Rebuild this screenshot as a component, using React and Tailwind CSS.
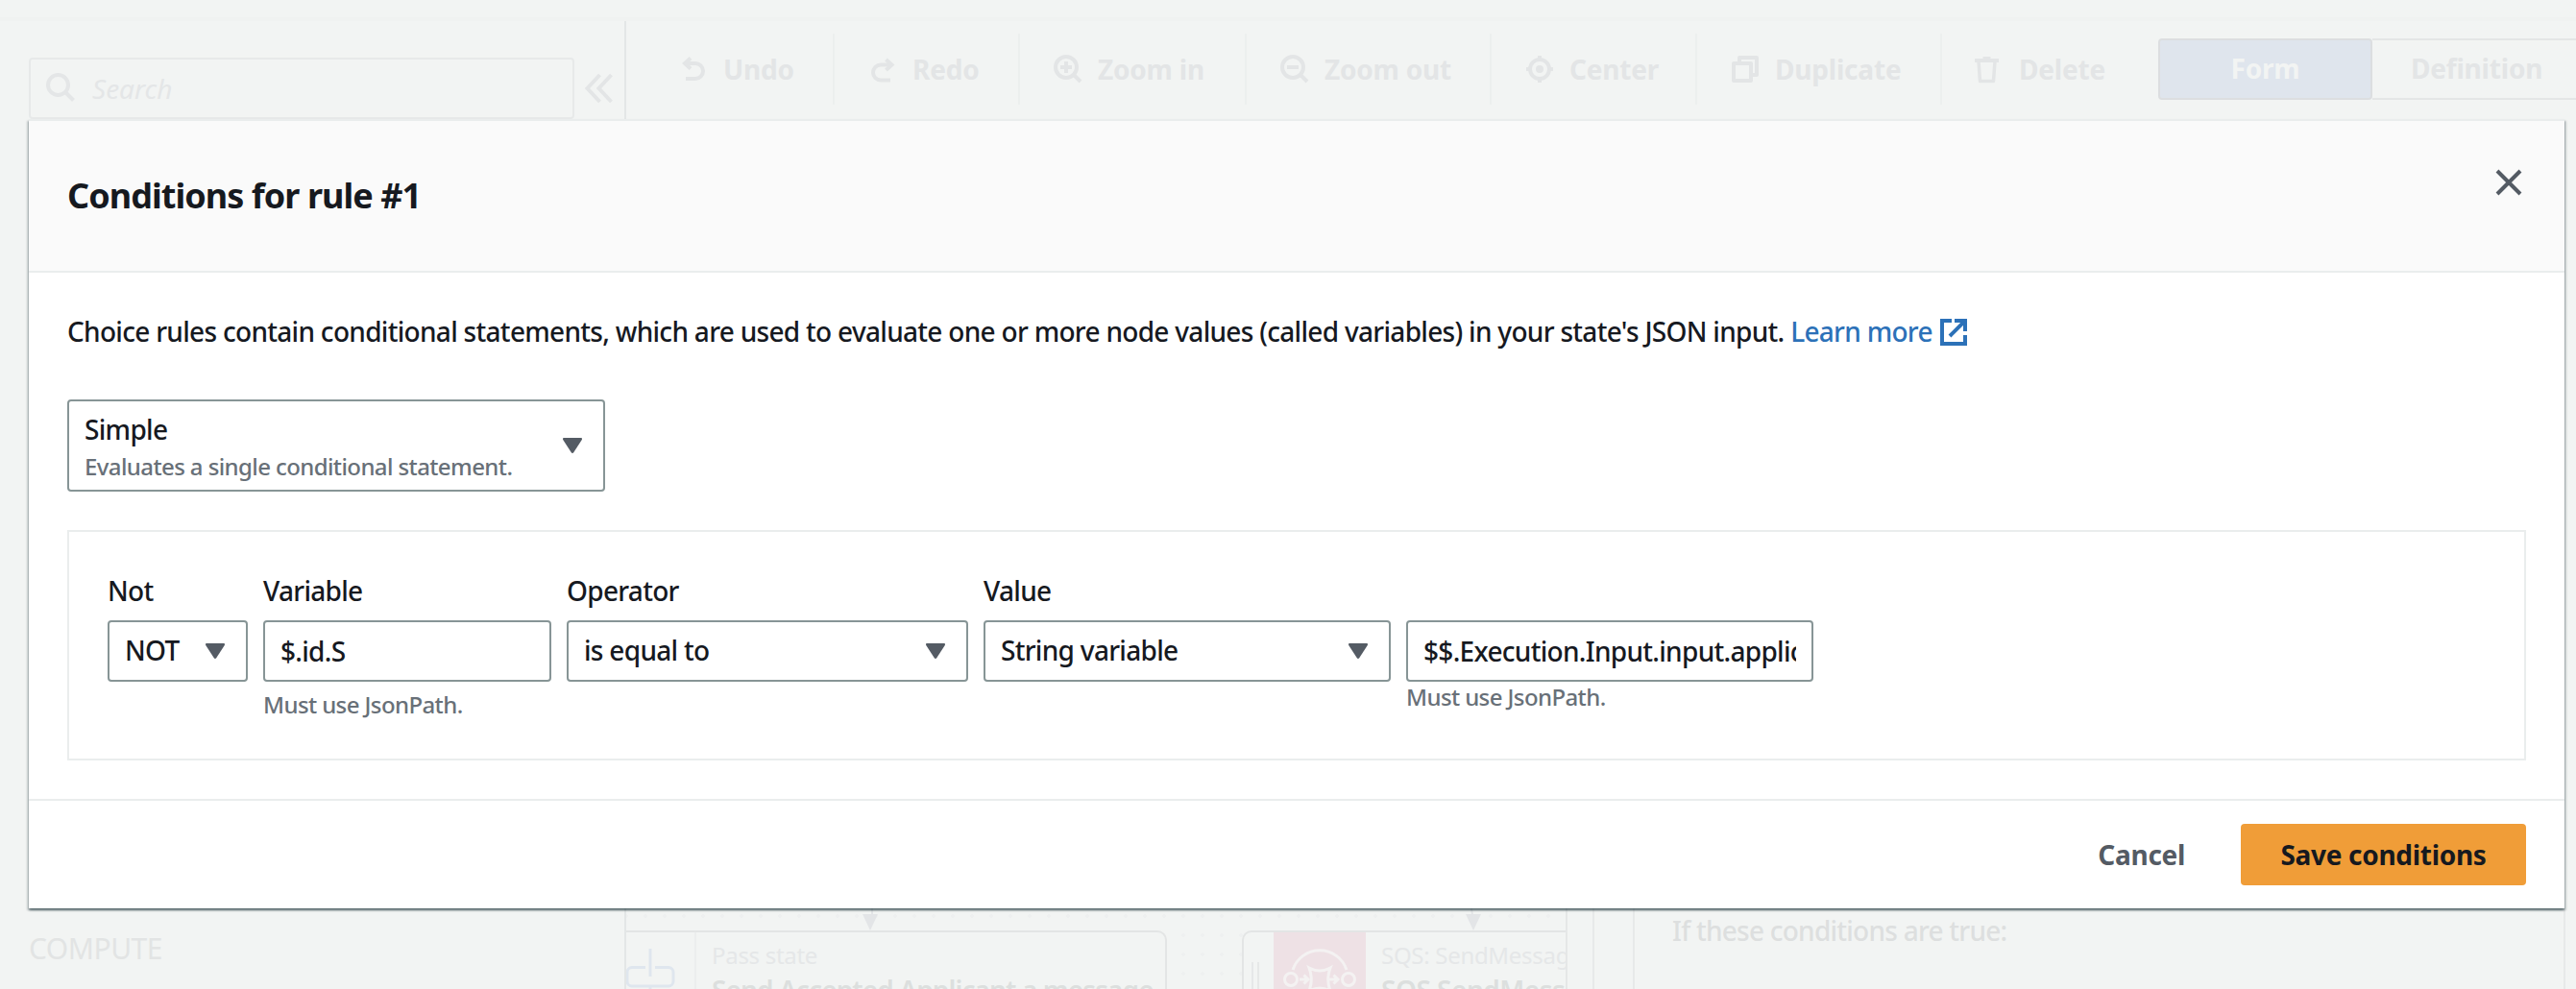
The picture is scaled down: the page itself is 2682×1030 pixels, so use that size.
const line = { fill: "none", stroke: "currentColor", strokeWidth: 4, strokeLinejoin: "round" };

function Svg({ size = 32, children, className = "" }) {
  return (
    <svg width={size} height={size} viewBox={`0 0 ${size} ${size}`} className={`shrink-0 ${className}`} {...line}>
      {children}
    </svg>
  );
}

const icons = {
  undo: (
    <>
      <path d="M13 4.5 7 10l6 5.5" strokeLinejoin="miter" />
      <path d="M7 10h11a8 8 0 0 1 0 16H8" />
    </>
  ),
  redo: (
    <>
      <path d="m19.5 6 6 5.5-6 5.5" strokeLinejoin="miter" />
      <path d="M25 11.5H14a8 8 0 0 0 0 16h10" />
    </>
  ),
  zoomIn: (
    <>
      <circle cx="14" cy="14" r="11" />
      <path d="m21.5 21.5 7.5 7.5M8 14h12M14 8v12" />
    </>
  ),
  zoomOut: (
    <>
      <circle cx="14" cy="14" r="11" />
      <path d="m21.5 21.5 7.5 7.5M8 14h12" />
    </>
  ),
  center: (
    <>
      <circle cx="16" cy="16" r="10" />
      <circle cx="16" cy="16" r="4" fill="currentColor" stroke="none" />
      <path d="M16 2v4M16 26v4M2 16h4M26 16h4" />
    </>
  ),
  duplicate: (
    <>
      <rect x="4" y="10" width="18" height="18" />
      <path d="M10 8V4h18v18h-4" />
    </>
  ),
  remove: (
    <>
      <path d="M1 7h25M9.500 5h8" />
      <path d="m5 8 1.5 20.500h14L22 8" strokeWidth="3.500" />
    </>
  ),
};

const tools = [
  { label: "Undo", icon: "undo", cls: "w-[217px] pl-[54px] border-r-2" },
  { label: "Redo", icon: "redo", cls: "w-[193px] pl-[34px] border-r-2" },
  { label: "Zoom in", icon: "zoomIn", cls: "w-[236px] pl-[34px] border-r-2" },
  { label: "Zoom out", icon: "zoomOut", cls: "w-[255px] pl-[34px] border-r-2" },
  { label: "Center", icon: "center", cls: "w-[214px] pl-[34px] border-r-2" },
  { label: "Duplicate", icon: "duplicate", cls: "w-[255px] pl-[34px] border-r-2" },
  { label: "Delete", icon: "remove", cls: "w-[225px] pl-[33px]" },
];

function Toolbar() {
  return (
    <div className="flex h-[104px] pt-[13px] text-[28px] font-bold tracking-[-0.2px] text-[#e3e5e6]">
      {tools.map((t) => (
        <div key={t.label} className={`flex h-[74px] shrink-0 items-center gap-[15px] border-[#ecefee] ${t.cls}`}>
          <Svg>{icons[t.icon]}</Svg>
          <span className="relative whitespace-nowrap pb-px leading-[44px]">{t.label}</span>
        </div>
      ))}
      <div className="mt-[5px] flex h-16 shrink-0">
        <div className="flex w-[223px] items-center justify-center rounded-[4px] border-2 border-[#dcdee0] bg-[#dfe5ed] pb-0.5 text-[#f2f4f3]">
          Form
        </div>
        <div className="flex w-[240px] items-center border-y-2 border-[#e4e6e6] pb-0.5 pl-10">Definition</div>
      </div>
    </div>
  );
}

function Sidebar() {
  return (
    <div className="flex w-[652px] shrink-0 flex-col border-r-2 border-[#e3e6e6] pl-[30px]">
      <div className="mt-[38px] flex items-center">
        <div className="flex h-16 w-[568px] items-center gap-3 rounded-[4px] border-2 border-[#e7e9e9] pl-3.5 text-[#e4e6e7]">
          <Svg>
            <circle cx="14.500" cy="12.500" r="10.500" />
            <path d="m22 20 8.500 8.500" />
          </Svg>
          <span className="pl-1.5 text-[28px] italic leading-[44px]">Search</span>
        </div>
        <Svg className="ml-[10px] text-[#e3e5e6]">
          <path d="M16.500 2 3.500 16l13 14M28.500 2 15.500 16l13 14" strokeLinejoin="miter" />
        </Svg>
      </div>
      <div className="mt-[842px] text-[30px] leading-[44px] tracking-[-0.5px] text-[#e2e4e4]">COMPUTE</div>
    </div>
  );
}

function Canvas() {
  return (
    <div className="relative w-[980px] shrink-0 overflow-hidden border-r-2 border-[#e5e7e7] bg-[radial-gradient(circle,#eef0f0_1.500px,transparent_2px)] bg-[length:20px_20px] bg-[position:10px_-2px]">
      <div className="absolute -left-[20px] top-[843px] flex h-[130px] w-[583px] rounded-[10px] border-2 border-[#e3e5e5] bg-[#f2f4f3]">
        <div className="w-[91px] shrink-0 border-r-2 border-[#eceeee]">
          <svg width="72" height="90" viewBox="0 0 72 90" fill="none" stroke="#dfe6ee" strokeWidth="3">
            <path d="M38 36.500H24a5 5 0 0 0-5 5V51a5 5 0 0 0 5 5h38a5 5 0 0 0 5-5v-9.500a5 5 0 0 0-5-5H48M43 17v29M43 57v20" />
          </svg>
        </div>
        <div className="whitespace-nowrap pl-4 pt-[6px]">
          <div className="text-[24px] leading-[36px] tracking-[-0.3px] text-[#e5e7e8]">Pass state</div>
          <div className="text-[28px] font-semibold leading-[36px] tracking-[-0.9px] text-[#dcdfde]">
            Send Accepted Applicant a message
          </div>
        </div>
      </div>
      <div className="absolute left-[641px] top-[843px] flex h-[130px] w-[560px] rounded-[10px] border-2 border-[#e3e5e5] bg-[#f2f4f3]">
        <div className="flex w-[31px] shrink-0 gap-1 pl-2 pt-[31px]">
          <div className="w-0.5 bg-[#e6e8e8]" />
          <div className="w-0.5 bg-[#e6e8e8]" />
        </div>
        <svg width="96" height="96" viewBox="0 0 96 96" className="shrink-0 bg-[#eee1e5]" fill="none" stroke="#f4f2f2" strokeWidth="3">
          <path d="M20 39a29.500 29.500 0 0 1 56 0" />
          <circle cx="18" cy="49" r="6.500" />
          <circle cx="78" cy="49" r="6.500" />
          <path d="M27 49h8M31.500 44.500 36 49l-4.500 4.500M58 49h8M62.500 44.500 67 49l-4.500 4.500" />
          <path d="M37 37q11 6 22 0-4.500 12 0 24-11-6-22 0 4.500-12 0-24z" />
          <path d="M20 59a29.500 29.500 0 0 0 56 0" />
        </svg>
        <div className="whitespace-nowrap pl-4 pt-[6px]">
          <div className="text-[24px] leading-[36px] tracking-[-0.3px] text-[#e5e7e8]">SQS: SendMessage</div>
          <div className="text-[28px] font-semibold leading-[36px] tracking-[-0.5px] text-[#dcdfde]">SQS SendMessage</div>
        </div>
      </div>
      <svg className="absolute left-[240px] top-[816px]" width="660" height="28" viewBox="0 0 660 28" fill="#e3e5e7" stroke="#e3e5e7">
        <path d="M16 0v10" strokeWidth="2" />
        <path d="M6 10h16l-8 17z" stroke="none" />
        <path d="m639 0 2 10" strokeWidth="2" />
        <path d="M634 10h16l-8 17z" stroke="none" />
      </svg>
    </div>
  );
}

function Inspector() {
  return (
    <div className="flex grow pl-[26px]">
      <div className="w-[44px] shrink-0 border-x-2 border-[#e7e9e9]" />
      <div className="w-[969px] shrink-0 border-r-2 border-[#e7e9e9] pl-[39px] pt-[821px] text-[28px] font-medium leading-[44px] tracking-[-0.75px] text-[#dddfdf]">
        If these conditions are true:
      </div>
    </div>
  );
}

function Caret() {
  return (
    <svg width="20" height="16" viewBox="0 0 20 16" className="shrink-0 fill-[#545b64]">
      <path d="M1.200 0h17.600c1 0 1.500 1 1 1.900l-8.600 13.400c-.6.900-1.800.9-2.400 0L.2 1.900C-.3 1 .2 0 1.200 0z" />
    </svg>
  );
}

const box = "flex h-16 items-center rounded-[4px] border-2 border-[#879596] bg-white";

function Select({ value }) {
  return (
    <div className={`${box} justify-between pl-4 pr-[22px]`}>
      <span className="whitespace-nowrap pb-0.5">{value}</span>
      <Caret />
    </div>
  );
}

function Input({ value }) {
  return (
    <div className={`${box} px-4`}>
      <span className="w-full overflow-hidden whitespace-nowrap">{value}</span>
    </div>
  );
}

function Field({ label, hint, hintClass = "", className, children }) {
  return (
    <div className={`shrink-0 ${className}`}>
      <div className="mb-[11px] h-10 leading-10">{label}</div>
      {children}
      {hint && (
        <div className={`text-[24px] leading-8 tracking-[-0.6px] text-[#687078] ${hintClass}`}>{hint}</div>
      )}
    </div>
  );
}

function Dialog() {
  return (
    <div className="absolute left-[30px] top-[124px] flex h-[822px] w-[2640px] flex-col border-t-2 border-[#eaeded] bg-white text-[28px] font-medium tracking-[-0.7px] text-[#16191f] shadow-[0_2px_2px_rgba(0,28,36,0.5),2px_2px_2px_rgba(0,28,36,0.15),-2px_2px_2px_rgba(0,28,36,0.15)]">
      <div className="flex h-[158px] shrink-0 items-center justify-between border-b-2 border-[#eaeded] bg-[#fafafa] pl-10 pr-[44px]">
        <h1 className="text-[36px] font-bold leading-[44px] tracking-[-0.95px]">Conditions for rule #1</h1>
        <svg width="28" height="28" viewBox="0 0 28 28" className="mb-7 text-[#545b64]" {...line}>
          <path d="m2 2 24 24M26 2 2 26" />
        </svg>
      </div>
      <div className="h-[548px] shrink-0 px-10 pt-[41px]">
        <p className="h-10 whitespace-nowrap leading-10">
          Choice rules contain conditional statements, which are used to evaluate one or more node values (called
          variables) in your state's JSON input.{" "}
          <a className="text-[#2c71b8]">
            Learn more
            <svg width="28" height="28" viewBox="0 0 28 28" className="relative ml-2 inline-block align-[-4px]" {...line} strokeLinejoin="miter">
              <path d="M12 2H2v24h24v-9M15 2h11v11M26 2 10 18" />
            </svg>
          </a>
        </p>
        <div className="mt-[51px] flex h-24 w-[560px] items-center justify-between rounded-[4px] border-2 border-[#879596] pl-4 pr-[22px]">
          <div className="pt-0.5">
            <div className="leading-[42px]">Simple</div>
            <div className="text-[24px] leading-9 tracking-[-0.6px] text-[#687078]">
              Evaluates a single conditional statement.
            </div>
          </div>
          <Caret />
        </div>
        <div className="mt-10 flex h-[240px] gap-4 border-2 border-[#eaeded] pl-10 pt-[41px]">
          <Field label="Not" className="w-[146px]">
            <Select value="NOT" />
          </Field>
          <Field label="Variable" hint="Must use JsonPath." hintClass="mt-2" className="w-[300px]">
            <Input value="$.id.S" />
          </Field>
          <Field label="Operator" className="w-[418px]">
            <Select value="is equal to" />
          </Field>
          <Field label="Value" className="w-[424px]">
            <Select value="String variable" />
          </Field>
          <Field label="" hint="Must use JsonPath." className="w-[424px]">
            <Input value="$$.Execution.Input.input.applicantId" />
          </Field>
        </div>
      </div>
      <div className="flex grow items-center justify-end border-t-2 border-[#eaeded] pr-10 font-bold tracking-[-0.3px]">
        <span className="mr-[58px] pb-px text-[#545b64]">Cancel</span>
        <button className="h-16 w-[297px] rounded-[4px] bg-[#f09d38] pb-px font-bold tracking-[-0.3px]">
          Save conditions
        </button>
      </div>
    </div>
  );
}

export default function App() {
  return (
    <div className="relative flex h-[1030px] w-[2682px] flex-col overflow-hidden bg-[#f2f4f3] font-['Noto_Sans','Open_Sans',sans-serif]">
      <div className="h-[22px] shrink-0 border-b-4 border-[#f0f2f1]" />
      <div className="flex h-[1008px] shrink-0 overflow-hidden">
        <Sidebar />
        <div className="flex grow flex-col">
          <Toolbar />
          <div className="flex grow">
            <Canvas />
            <Inspector />
          </div>
        </div>
      </div>
      <Dialog />
    </div>
  );
}
